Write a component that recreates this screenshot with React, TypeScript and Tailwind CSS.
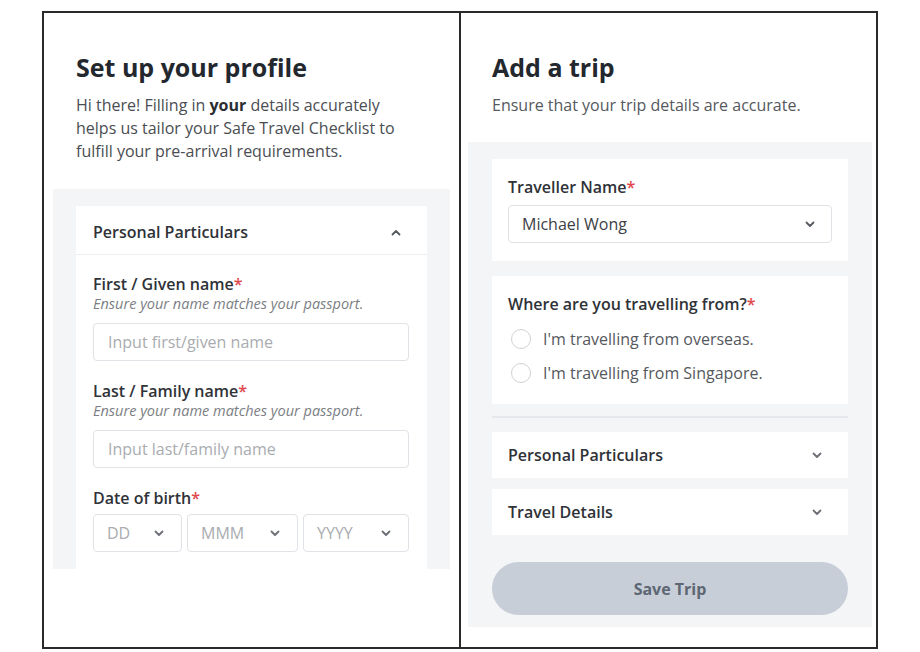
import React from "react";

const font = { fontFamily: "'Open Sans', Lato, sans-serif" };

function Chevron({ up = false, className = "" }: { up?: boolean; className?: string }) {
  return (
    <svg width="10" height="7" viewBox="0 0 10 7" className={className}>
      <polyline
        points={up ? "1.5,5.5 5,2 8.5,5.5" : "1.5,1.5 5,5 8.5,1.5"}
        fill="none"
        stroke="currentColor"
        strokeWidth="1.8"
        strokeLinecap="round"
        strokeLinejoin="round"
      />
    </svg>
  );
}

function Label({ text }: { text: string }) {
  return (
    <div className="text-[16px] leading-[20px] font-semibold text-[#2f3237]">
      {text}
      <span className="text-[#e0464b]">*</span>
    </div>
  );
}

function Hint() {
  return (
    <div className="text-[14.5px] leading-[20px] italic text-[#7b7e83]">
      Ensure your name matches your passport.
    </div>
  );
}

function TextInput({ placeholder }: { placeholder: string }) {
  return (
    <div className="mt-[9px] h-[38px] rounded-[4px] border border-[#dfe2e6] flex items-center pl-[14px] text-[16px] text-[#a9acb0]">
      {placeholder}
    </div>
  );
}

function DateSelect({ text, width }: { text: string; width: string }) {
  return (
    <div className={`${width} h-[38px] rounded-[4px] border border-[#dfe2e6] flex items-center justify-between pl-[13px] pr-[17px] text-[16px] text-[#a9acb0]`}>
      <span>{text}</span>
      <Chevron className="text-[#6b6f75]" />
    </div>
  );
}

function ProfilePanel() {
  return (
    <div className="w-[417px] h-full border-r-2 border-[#2a2a2a] pt-[38px] flex flex-col">
      <h1 className="pl-[32px] text-[25px] leading-[32px] font-bold text-[#23272e]">Set up your profile</h1>
      <p className="pl-[32px] pr-[10px] mt-[11px] text-[16px] leading-[23px] text-[#4a4d52]">
        Hi there! Filling in <span className="font-bold text-[#2a2d32]">your</span> details accurately
        <br />
        helps us tailor your Safe Travel Checklist to
        <br />
        fulfill your pre-arrival requirements.
      </p>

      <div className="mx-[9px] mt-[26px] h-[380px] overflow-hidden bg-[#f4f5f7] px-[23px] pt-[17px]">
        <div className="bg-white">
          <div className="h-[49px] flex items-center justify-between pl-[17px] pr-[26px] pt-[4px] border-b border-[#eceef1]">
            <span className="text-[16px] font-semibold text-[#2f3237]">Personal Particulars</span>
            <Chevron up className="text-[#55595f]" />
          </div>
          <div className="pl-[17px] pr-[18px] pt-[19px] pb-[20px]">
            <Label text="First / Given name" />
            <Hint />
            <TextInput placeholder="Input first/given name" />

            <div className="mt-[20px]">
              <Label text="Last / Family name" />
              <Hint />
              <TextInput placeholder="Input last/family name" />
            </div>

            <div className="mt-[20px]">
              <Label text="Date of birth" />
              <div className="mt-[6px] flex gap-[5px]">
                <DateSelect text="DD" width="w-[89px]" />
                <DateSelect text="MMM" width="w-[111px]" />
                <DateSelect text="YYYY" width="w-[106px]" />
              </div>
            </div>
          </div>
        </div>
      </div>
    </div>
  );
}

function Radio({ text }: { text: string }) {
  return (
    <div className="h-[34px] flex items-center gap-[12px] pl-[3px]">
      <span className="w-[20px] h-[20px] rounded-full border-[1.5px] border-[#cfd2d6] bg-white" />
      <span className="text-[16px] text-[#55585d]">{text}</span>
    </div>
  );
}

function Collapsed({ title }: { title: string }) {
  return (
    <div className="bg-white h-[46px] flex items-center justify-between pl-[16px] pr-[26px]">
      <span className="text-[16px] font-semibold text-[#2f3237]">{title}</span>
      <Chevron className="text-[#6b6f75]" />
    </div>
  );
}

function TripPanel() {
  return (
    <div className="flex-1 h-full pt-[38px] flex flex-col">
      <h1 className="pl-[31px] text-[25px] leading-[32px] font-bold text-[#23272e]">Add a trip</h1>
      <p className="pl-[31px] mt-[11px] text-[16px] leading-[22px] text-[#55585d]">
        Ensure that your trip details are accurate.
      </p>

      <div className="ml-[7px] mr-[4px] mt-[26px] bg-[#f4f5f7] px-[24px] pt-[17px] pb-[12px]">
        <div className="bg-white px-[16px] pt-[18px] pb-[18px]">
          <Label text="Traveller Name" />
          <div className="mt-[8px] h-[38px] rounded-[4px] border border-[#dfe2e6] flex items-center justify-between pl-[13px] pr-[16px]">
            <span className="text-[16px] text-[#3d4045]">Michael Wong</span>
            <Chevron className="text-[#55595f]" />
          </div>
        </div>

        <div className="mt-[15px] bg-white px-[16px] pt-[18px] pb-[14px]">
          <Label text="Where are you travelling from?" />
          <div className="mt-[8px]">
            <Radio text="I'm travelling from overseas." />
            <Radio text="I'm travelling from Singapore." />
          </div>
        </div>

        <div className="mt-[12px] border-t-2 border-[#e4e7eb] pt-[14px] flex flex-col gap-[11px]">
          <Collapsed title="Personal Particulars" />
          <Collapsed title="Travel Details" />
        </div>

        <button className="mt-[27px] w-full h-[53px] rounded-full bg-[#c7ced7] text-[16px] font-bold text-[#5d6673]">
          Save Trip
        </button>
      </div>
    </div>
  );
}

export default function App() {
  return (
    <div className="w-[920px] h-[652px] bg-white pt-[11px] pl-[42px]" style={font}>
      <div className="w-[836px] h-[638px] border-2 border-[#2a2a2a] flex">
        <ProfilePanel />
        <TripPanel />
      </div>
    </div>
  );
}
